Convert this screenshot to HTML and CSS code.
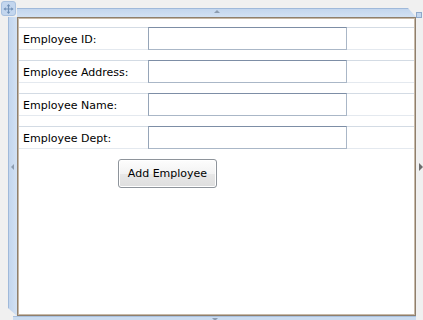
FILE: index.html
```html
<!DOCTYPE html>
<html lang="en">
<head>
  <meta charset="UTF-8">
  <title>Add Employee</title>
  <link rel="stylesheet" href="styles.css">
</head>
<body>
  <div class="designer">
    <div class="move-handle">
      <svg width="14" height="14" viewBox="0 0 14 14">
        <path d="M7 1.5 L9 4 H7.6 V6.4 H10 V5 L12.5 7 L10 9 V7.6 H7.6 V10 H9 L7 12.5 L5 10 H6.4 V7.6 H4 V9 L1.5 7 L4 5 V6.4 H6.4 V4 H5 Z" fill="#6f8fb5"/>
      </svg>
    </div>

    <div class="ruler ruler-top"><span class="arrow arrow-up"></span></div>
    <div class="ruler ruler-left"><span class="arrow arrow-left"></span></div>

    <div class="form">
      <div class="row">
        <label class="label">Employee ID:</label>
        <input class="textbox" type="text">
      </div>
      <div class="row">
        <label class="label">Employee Address:</label>
        <input class="textbox" type="text">
      </div>
      <div class="row">
        <label class="label">Employee Name:</label>
        <input class="textbox" type="text">
      </div>
      <div class="row">
        <label class="label">Employee Dept:</label>
        <input class="textbox" type="text">
      </div>
      <button class="btn" type="button">Add Employee</button>
    </div>

    <div class="side-right"><span class="arrow arrow-right"></span></div>
    <div class="ruler ruler-bottom"><span class="arrow arrow-down"></span></div>
    <div class="corner-br"></div>
  </div>
</body>
</html>
```

FILE: styles.css
```css
* {
  margin: 0;
  padding: 0;
  box-sizing: border-box;
}

body {
  width: 423px;
  height: 320px;
  overflow: hidden;
  background: #f0f0f0;
  font-family: 'DejaVu Sans', sans-serif;
  font-size: 11px;
  color: #000;
}

.designer {
  position: relative;
  display: grid;
  grid-template-columns: 8px 9px 399px 7px;
  grid-template-rows: 8px 9px 299px 4px;
  width: 423px;
  height: 320px;
}

.move-handle {
  position: absolute;
  top: 1px;
  left: 1px;
  width: 15px;
  height: 15px;
  border-radius: 3px;
  background: #c3d6ee;
  border: 1px solid #a9c1df;
  display: flex;
  align-items: center;
  justify-content: center;
  z-index: 2;
}

.ruler {
  background: #c8daef;
  display: flex;
  align-items: center;
  justify-content: center;
}

.ruler-top {
  grid-column: 3;
  grid-row: 2;
  border-top: 1px solid #9fb9da;
  clip-path: polygon(0 0, calc(100% - 8px) 0, 100% 100%, 0 100%);
  background: linear-gradient(#c3d6ee, #d2e1f3);
}

.ruler-left {
  grid-column: 2;
  grid-row: 3;
  border-left: 1px solid #9fb9da;
  clip-path: polygon(0 0, 100% 0, 100% 100%, 0 calc(100% - 8px));
  background: linear-gradient(90deg, #c3d6ee, #d2e1f3);
}

.ruler-bottom {
  grid-column: 2 / 4;
  grid-row: 4;
  align-items: flex-start;
  background: #cbdcf0;
  border-top: 1px solid #a9c1df;
  margin-left: 5px;
}

.side-right {
  grid-column: 4;
  grid-row: 3;
  display: flex;
  align-items: center;
  justify-content: flex-end;
}

.corner-br {
  grid-column: 4;
  grid-row: 1 / 3;
  align-self: end;
  width: 6px;
  height: 6px;
  margin-bottom: -1px;
  background: #c3d6ee;
  border: 1px solid #8fa9cb;
}

.arrow {
  width: 0;
  height: 0;
  border: 3px solid transparent;
}

.arrow-up {
  border-bottom-color: #8c9cb0;
  border-top-width: 0;
  margin-top: -3px;
}

.arrow-down {
  border-top-color: #8c9cb0;
  border-bottom-width: 0;
  margin-top: 1px;
}

.arrow-left {
  border-right-color: #8c9cb0;
  border-left-width: 0;
  margin-left: -2px;
}

.arrow-right {
  border-left-color: #6d6d6d;
  border-width: 4px 0 4px 4px;
}

.form {
  grid-column: 3;
  grid-row: 3;
  background: #fff;
  border: 1px solid #8f7f6c;
  box-shadow: inset 1px 1px 0 #c7b9a8, inset -1px -1px 0 #c7b9a8;
  padding: 9px 1px 0 1px;
  display: flex;
  flex-direction: column;
  align-items: flex-start;
}

.row {
  display: flex;
  align-items: center;
  width: 100%;
  height: 23px;
  border-top: 1px solid #d3dbe4;
  border-bottom: 1px solid #e4e9ef;
  margin-bottom: 10px;
}

.label {
  width: 129px;
  padding-left: 4px;
  padding-top: 1px;
}

.textbox {
  width: 199px;
  height: 23px;
  margin-top: -1px;
  margin-bottom: -1px;
  border: 1px solid #aab7c7;
  border-top-color: #7d8ea6;
  border-left-color: #96a5b8;
  background: #fff;
  outline: none;
}

.btn {
  margin-left: 99px;
  width: 99px;
  height: 29px;
  font-family: 'DejaVu Sans', sans-serif;
  font-size: 11px;
  color: #000;
  border: 1px solid #8e949b;
  border-radius: 3px;
  background: linear-gradient(#fdfdfd 0%, #f3f3f3 50%, #e8e8e8 51%, #dedede 100%);
  box-shadow: inset 0 0 0 1px #ffffff;
}
```
